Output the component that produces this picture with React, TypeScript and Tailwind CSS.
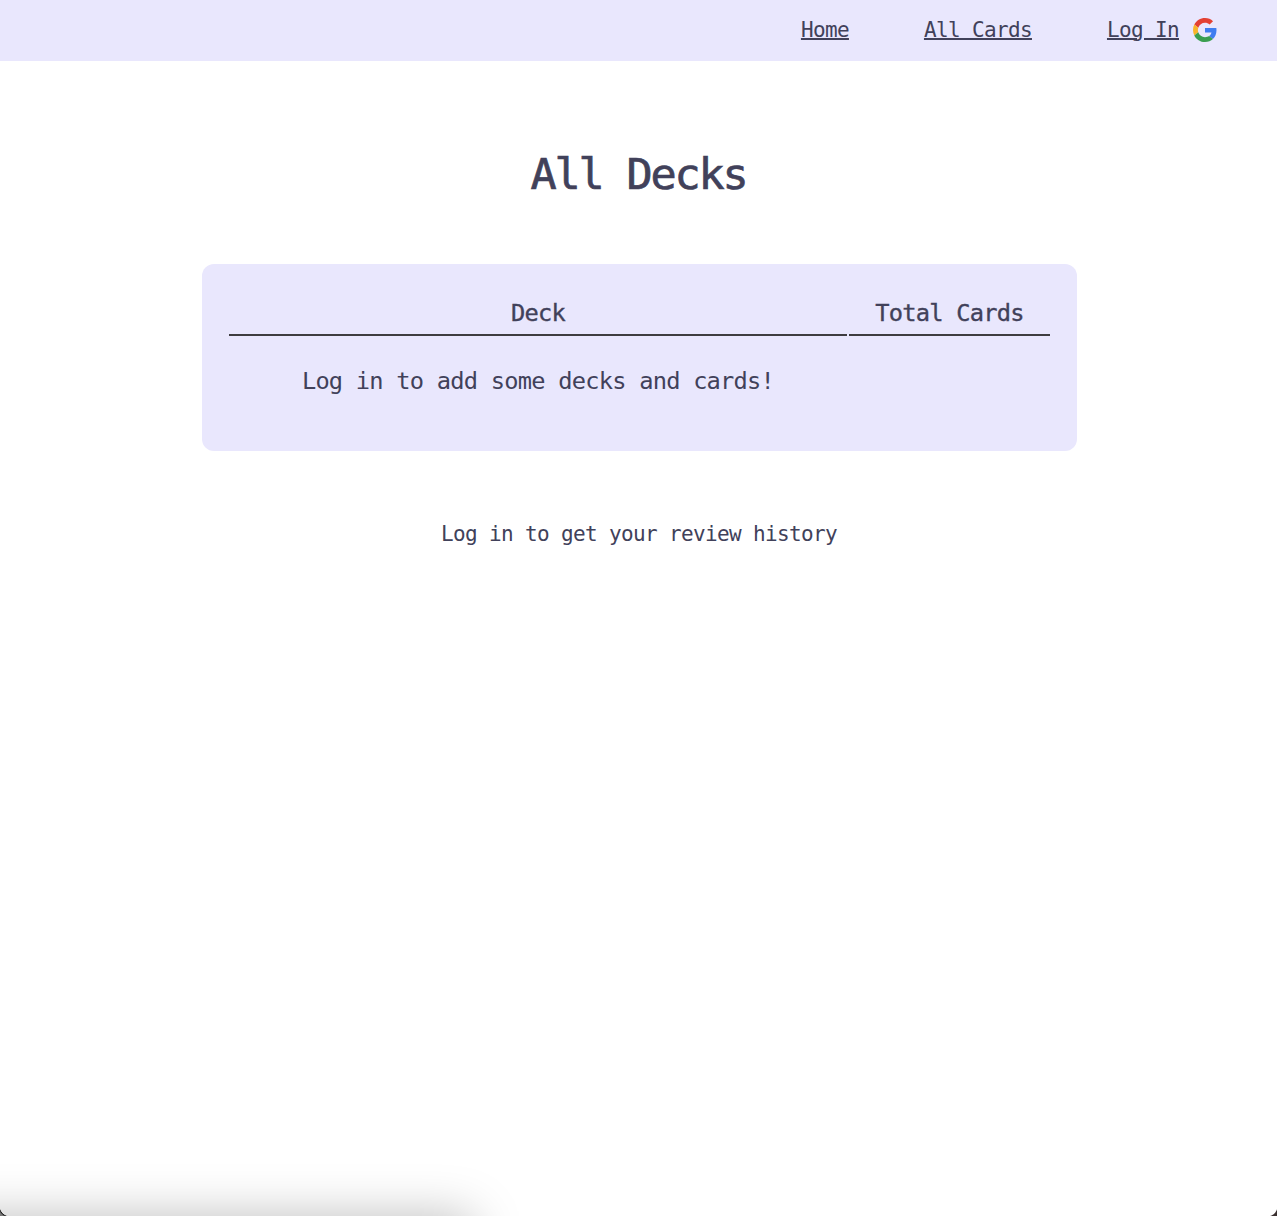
import React from 'react';

function GoogleLogo() {
  return (
    <svg viewBox="0 0 48 48" className="block h-6 w-6" role="img" aria-label="Google">
      <path fill="#E34133" d="M24 9.5c3.54 0 6.71 1.22 9.21 3.6l6.85-6.85C35.9 2.38 30.47 0 24 0 14.62 0 6.51 5.38 2.56 13.22l7.98 6.19C12.43 13.72 17.74 9.5 24 9.5z" />
      <path fill="#3F7DF0" d="M46.98 24.55c0-1.57-.15-3.09-.38-4.55H24v9.02h12.94c-.58 2.96-2.26 5.48-4.78 7.18l7.73 6c4.51-4.18 7.09-10.36 7.09-17.65z" />
      <path fill="#F7B529" d="M10.53 28.59c-.48-1.45-.76-2.99-.76-4.59s.27-3.14.76-4.59l-7.98-6.19C.92 16.46 0 20.12 0 24c0 3.88.92 7.54 2.56 10.78l7.97-6.19z" />
      <path fill="#3A9E50" d="M24 48c6.48 0 11.93-2.13 15.89-5.81l-7.73-6c-2.15 1.45-4.92 2.3-8.16 2.3-6.26 0-11.57-4.22-13.47-9.91l-7.98 6.19C6.51 42.62 14.62 48 24 48z" />
    </svg>
  );
}

function NavLink({ children }: { children: React.ReactNode }) {
  return (
    <a href="#" className="underline decoration-2 underline-offset-1">
      {children}
    </a>
  );
}

export default function App() {
  return (
    <div className="relative h-[1216px] overflow-hidden bg-white font-['DejaVu_Sans_Mono',monospace] text-[21px] leading-6 tracking-[-0.64px] whitespace-nowrap text-[#41415a]">
      <nav className="flex h-[61px] items-center justify-end gap-[75px] bg-[#e9e7fd] pr-[60px] pb-[2px]">
        <NavLink>Home</NavLink>
        <NavLink>All Cards</NavLink>
        <div className="flex items-center gap-[14px]">
          <NavLink>Log In</NavLink>
          <GoogleLogo />
        </div>
      </nav>

      <main className="flex flex-col items-center">
        <h1 className="mt-[87px] text-[43.5px] leading-[52px] tracking-[-2.19px] [-webkit-text-stroke:0.7px_#41415a]">
          All Decks
        </h1>

        <section className="mt-[64px] ml-[2px] h-[187px] w-[875px] rounded-xl bg-[#e9e7fd] px-[27px] pt-[29px] text-[23.7px] tracking-[-0.77px]">
          <div className="grid grid-cols-[618px_201px] gap-x-[2px] text-center leading-[41px]">
            <div className="h-[43px] border-b-2 border-[#3e3c40] [-webkit-text-stroke:0.35px_#41415a]">Deck</div>
            <div className="h-[43px] border-b-2 border-[#3e3c40] [-webkit-text-stroke:0.35px_#41415a]">Total Cards</div>
            <div className="pt-[25px]">Log in to add some decks and cards!</div>
          </div>
        </section>

        <p className="mt-[71px] ml-px">Log in to get your review history</p>
      </main>

      <div className="pointer-events-none absolute top-full -left-[100px] h-[100px] w-[572px] shadow-[0_0_50px_rgba(0,0,0,0.26)]" />
      <div className="pointer-events-none absolute bottom-0 left-0 h-[10px] w-[10px] bg-[radial-gradient(circle_at_100%_0,transparent_10px,#222_10.7px,#777_12px)]" />
      <div className="pointer-events-none absolute right-0 bottom-0 h-[10px] w-[10px] bg-[radial-gradient(circle_at_0_0,transparent_10px,#3b3030_11px)]" />
    </div>
  );
}
